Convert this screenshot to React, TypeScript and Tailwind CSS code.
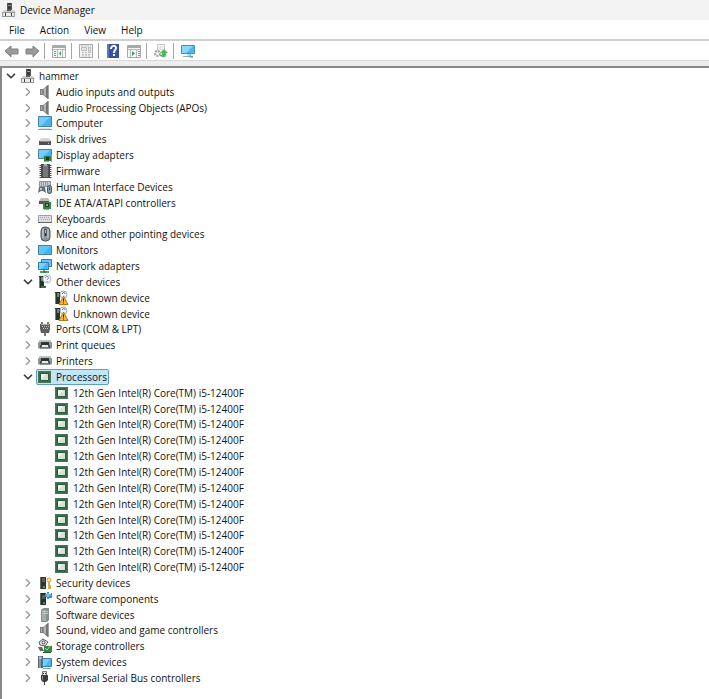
import React, { useState } from 'react';
import { ChevronDown, ChevronRight } from 'lucide-react';

interface DeviceNode {
  label: string;
  icon: keyof typeof icons;
  children?: DeviceNode[];
}

const icons = {
  host: (
    <>
      <path d="M6 1h5v8H6z" fill="#5a5a5a" />
      <path d="M7 1h3v7H7z" fill="#3c3c3c" />
      <path d="M7 3.500h3" stroke="#999" />
      <path d="M3 8h10l2 3H1z" fill="#cfcfcf" />
      <path d="M6 7h4v2H6z" fill="#5a5a5a" />
      <path d="M1 10h13v5H1z" fill="#ececec" />
      <path d="M1 10.500h13M1 14.500h13M1.500 10v5M13.500 10v5" stroke="#9a9a9a" />
      <path d="M4 11h1v3H4zM10 11h1v3h-1z" fill="#3d3d3d" />
    </>
  ),
  speaker: (
    <>
      <path d="M3 5h3v6H3z" fill="#7d7d7d" />
      <path d="M4 6h1v4H4z" fill="#adadad" />
      <path d="M6 5l5-4h1v14h-1l-5-4z" fill="#8d8d8d" />
      <path d="M8 4l3-3v14l-3-3z" fill="#757575" />
      <path d="M7 5l2-2v9l-2-1z" fill="#b4b4b4" />
      <path d="M11.500 1v14" stroke="#a2a2a2" />
    </>
  ),
  computer: (
    <>
      <path d="M1.500 1.500h13v10h-13z" fill="#45b4f5" stroke="#4384ab" />
      <path d="M2 2h11l-9 9H2z" fill="#75ccfb" />
      <path d="M1 14.500h14" stroke="#8798a3" />
      <path d="M3 13.500h10" stroke="#dbe6ec" />
    </>
  ),
  disk: (
    <>
      <path d="M4 7h8l2 3H2z" fill="#d6d6d6" />
      <path d="M2 10h12v4H2z" fill="#505050" />
      <path d="M3 10.500h10" stroke="#888" />
      <path d="M11 12h1v1h-1z" fill="#9fd6a0" />
    </>
  ),
  display: (
    <>
      <path d="M1.500 2.500h13v9h-13z" fill="#45b4f5" stroke="#4384ab" />
      <path d="M2 3h11l-8 8H2z" fill="#75ccfb" />
      <path d="M7 9h7v5H7z" fill="#327b40" />
      <path d="M9 10h3v3H9z" fill="#163e20" />
      <path d="M7 14.500h5M14.500 8v7" stroke="#b6a33c" />
    </>
  ),
  firmware: (
    <>
      <path d="M4 1h9v14H4z" fill="#4e4e4e" />
      <path d="M6 2h5v12H6z" fill="#777" />
      <path d="M3.500 2v13M13.500 2v13" stroke="#444" strokeWidth="2" strokeDasharray="1 1" />
      <path d="M7 1h3v2H7z" fill="#aaa" />
    </>
  ),
  hid: (
    <>
      <path d="M2.500 2.500h11v5h-11z" fill="#c3cbd1" stroke="#8b959c" />
      <path d="M4 4h8M4 6h8" stroke="#65717a" strokeDasharray="1 1" />
      <path d="M1 14l1-6h6l1 6-3-2H4z" fill="#5f6f7b" />
      <path d="M3 10h2M4 9v2" stroke="#e6eef3" />
      <rect x="10.500" y="6.500" width="4" height="8" rx="2" fill="#8f9ca6" stroke="#45535e" />
      <path d="M12.500 8v3" stroke="#45535e" />
    </>
  ),
  ide: (
    <>
      <path d="M4 3h7l2 3H2z" fill="#bbb" />
      <path d="M2 6h10v3H2z" fill="#575757" />
      <path d="M6 7h8v7H6z" fill="#3c8247" />
      <path d="M8 8h4v4H8z" fill="#204425" />
      <path d="M9 9h2v2H9z" fill="#86ac8a" />
      <path d="M7 14.500h5" stroke="#b3a64c" />
    </>
  ),
  keyboard: (
    <>
      <path d="M1.500 4.500h13v7h-13z" fill="#dedede" stroke="#9ba0a4" />
      <path d="M3 6.500h10M4 8.500h9" stroke="#a4aaae" strokeDasharray="1 1" />
      <path d="M1 11.500h14" stroke="#666" />
    </>
  ),
  mouse: (
    <>
      <rect x="4" y="1" width="9" height="14" rx="4" fill="#8b949b" stroke="#4b535a" />
      <path d="M6 3v9M11 3v9" stroke="#d1d7db" />
      <path d="M8.500 3v7" stroke="#303437" strokeWidth="2" />
      <path d="M8.500 4v3" stroke="#adbcc7" />
    </>
  ),
  monitor: (
    <>
      <path d="M1.500 3.500h13v9h-13z" fill="#45b4f5" stroke="#4384ab" />
      <path d="M2 4h11l-7 8H2z" fill="#65c4fa" />
    </>
  ),
  network: (
    <>
      <path d="M4.500 1.500h10v7h-10z" fill="#63c6fb" stroke="#3c7a9f" />
      <path d="M1.500 4.500h10v7h-10z" fill="#49b5f2" stroke="#2d7eae" />
      <path d="M2 5h8l-6 6H2z" fill="#78d2fd" />
      <path d="M3 14h9M7 12v2" stroke="#4aa35a" strokeWidth="2" />
      <path d="M6 13h3v2H6z" fill="#3d78a8" />
    </>
  ),
  other: (
    <>
      <path d="M2 2h5v12H2z" fill="#253529" />
      <path d="M2 3h1v11H2z" fill="#4d9865" />
      <path d="M4 4h2M4 6h2" stroke="#bfd6c4" />
      <path d="M4 12h5v2H4z" fill="#357249" />
      <circle cx="10" cy="5" r="4" fill="#f5f7fc" stroke="#b3bccb" />
      <path d="M8.500 4c0-2 3-2 3 0 0 1-1.500 1-1.500 2M10 7v1" fill="none" stroke="#6c7ba0" />
    </>
  ),
  unknown: (
    <>
      <path d="M1 2h5v12H1z" fill="#253529" />
      <path d="M1 3h1v11H1z" fill="#4d9865" />
      <path d="M3 4h2M3 6h2" stroke="#bfd6c4" />
      <circle cx="9.500" cy="4.500" r="3.500" fill="#f5f7fc" stroke="#9ba7b8" />
      <path d="M8.500 4c0-2 2.500-2 2.500 0" fill="none" stroke="#50618b" />
      <path d="M9.500 6l4.500 8.500H5z" fill="#f6b735" stroke="#b77819" />
      <path d="M9.500 8.500v3M9.500 12.500v1" stroke="#222" />
    </>
  ),
  port: (
    <>
      <path d="M3 3h10v5l-1 4H4L3 8z" fill="#5e5e5e" />
      <path d="M4 3.500h8" stroke="#aaa" />
      <path d="M5 5.500h7M6 7.500h5" stroke="#c3c3c3" strokeDasharray="1 1" />
      <path d="M5 1v2M11 1v2M8 12v3" stroke="#777" strokeWidth="2" />
    </>
  ),
  printer: (
    <>
      <path d="M3 3h10l2 3v5l-2 1H3l-2-1V6z" fill="#8e9695" />
      <path d="M3 3h10l1 2H2z" fill="#bcc2c1" />
      <path d="M4 5h8v3H4z" fill="#303533" />
      <path d="M3 8h10v3H3z" fill="#4d5351" />
      <path d="M5 8h6v2H5z" fill="#e6ebe9" />
      <path d="M4 10.500h8" stroke="#5a8a70" />
    </>
  ),
  cpu: (
    <>
      <path d="M1 2h13v12H1z" fill="#3b6c4a" />
      <path d="M1.500 2.500h12v11h-12z" fill="none" stroke="#5a8064" strokeDasharray="1 1" />
      <path d="M3.500 4.500h8v7h-8z" fill="#d3e4d5" stroke="#2e5a3b" />
      <path d="M4 5h5l-5 5z" fill="#f3f8f3" />
    </>
  ),
  security: (
    <>
      <path d="M3 2h6v12H3z" fill="#303632" />
      <path d="M3 2h1v12H3z" fill="#606d65" />
      <path d="M5 4h3M5 6h3" stroke="#7d8a80" />
      <path d="M6 11h2v2H6z" fill="#40a057" />
      <circle cx="12" cy="5" r="2" fill="#fae7a3" stroke="#d0a343" />
      <path d="M12 7v7M12 11h2M12 13h2" stroke="#d9ae4c" strokeWidth="2" />
    </>
  ),
  component: (
    <>
      <path d="M3 2h6v12H3z" fill="#27312b" />
      <path d="M3 2h1v12H3z" fill="#527160" />
      <path d="M5 5h3M5 7h3" stroke="#7d8f83" />
      <path d="M6 11h2v2H6z" fill="#3b965a" />
      <path d="M8 3h2V1h2v2h2V2h1v5h-3v1h-2V6H8z" fill="#3a8fca" />
      <path d="M9 4h5M11 2v4" stroke="#8fd1f6" />
    </>
  ),
  software: (
    <>
      <path d="M5 2l2-1h5v12l-2 2H4V3z" fill="#84908a" />
      <path d="M5 3h4v11H5z" fill="#a2aea8" />
      <path d="M5 4.500h6M5 6.500h6" stroke="#c0cac4" />
      <path d="M9 11h1v2H9z" fill="#739e80" />
    </>
  ),
  storage: (
    <>
      <path d="M2 4l4-3 5 3-3 4-5-1z" fill="#e6e6e6" stroke="#5d625f" />
      <circle cx="6.500" cy="4.500" r="1.500" fill="#fff" stroke="#444" />
      <path d="M1 9h4l2 4H3z" fill="#666" />
      <path d="M7 8h8v6H7z" fill="#3a8745" />
      <path d="M8 10l2 2 3-4" stroke="#b3cf7e" fill="none" />
      <path d="M6 14.500h8" stroke="#285f30" />
    </>
  ),
  system: (
    <>
      <path d="M1 2h5v12H1z" fill="#586670" />
      <path d="M2 2h2v12H2z" fill="#8e9aa1" />
      <path d="M2 4h3" stroke="#e1e9ec" />
      <path d="M5.500 4.500h9v8h-9z" fill="#49b5f2" stroke="#377fa8" />
      <path d="M6 5h7l-5 7H6z" fill="#78cdfb" />
      <path d="M6 14.500h8" stroke="#74a3bd" />
    </>
  ),
  usb: (
    <>
      <path d="M5.500 1.500h4v4h-4z" fill="#ddd" stroke="#777" />
      <path d="M6 3h1v1H6zM8 3h1v1H8z" fill="#333" />
      <path d="M4 5h7v5l-2 2H6l-2-2z" fill="#3c3c3c" />
      <path d="M5 6h1v4H5z" fill="#8c8c8c" />
      <path d="M7.500 12v3" stroke="#444" />
    </>
  ),
};

const processors: DeviceNode[] = Array.from({ length: 12 }, () => ({
  label: '12th Gen Intel(R) Core(TM) i5-12400F',
  icon: 'cpu',
}));

const categories: DeviceNode[] = [
  { label: 'Audio inputs and outputs', icon: 'speaker', children: [] },
  { label: 'Audio Processing Objects (APOs)', icon: 'speaker', children: [] },
  { label: 'Computer', icon: 'computer', children: [] },
  { label: 'Disk drives', icon: 'disk', children: [] },
  { label: 'Display adapters', icon: 'display', children: [] },
  { label: 'Firmware', icon: 'firmware', children: [] },
  { label: 'Human Interface Devices', icon: 'hid', children: [] },
  { label: 'IDE ATA/ATAPI controllers', icon: 'ide', children: [] },
  { label: 'Keyboards', icon: 'keyboard', children: [] },
  { label: 'Mice and other pointing devices', icon: 'mouse', children: [] },
  { label: 'Monitors', icon: 'monitor', children: [] },
  { label: 'Network adapters', icon: 'network', children: [] },
  {
    label: 'Other devices',
    icon: 'other',
    children: [
      { label: 'Unknown device', icon: 'unknown' },
      { label: 'Unknown device', icon: 'unknown' },
    ],
  },
  { label: 'Ports (COM & LPT)', icon: 'port', children: [] },
  { label: 'Print queues', icon: 'printer', children: [] },
  { label: 'Printers', icon: 'printer', children: [] },
  { label: 'Processors', icon: 'cpu', children: processors },
  { label: 'Security devices', icon: 'security', children: [] },
  { label: 'Software components', icon: 'component', children: [] },
  { label: 'Software devices', icon: 'software', children: [] },
  { label: 'Sound, video and game controllers', icon: 'speaker', children: [] },
  { label: 'Storage controllers', icon: 'storage', children: [] },
  { label: 'System devices', icon: 'system', children: [] },
  { label: 'Universal Serial Bus controllers', icon: 'usb', children: [] },
];

const root: DeviceNode = { label: 'hammer', icon: 'host', children: categories };

const indents = ['pl-px', 'pl-[18px]', 'pl-[35px]'];

const Icon: React.FC<{ name: keyof typeof icons }> = ({ name }) => (
  <svg viewBox="0 0 16 16" className="size-4 shrink-0" aria-hidden="true">
    {icons[name]}
  </svg>
);

interface RowProps {
  node: DeviceNode;
  depth: number;
  open: boolean;
  selected: boolean;
  onToggle: () => void;
  onSelect: () => void;
}

const Row: React.FC<RowProps> = ({ node, depth, open, selected, onToggle, onSelect }) => (
  <li className={`flex h-4 min-h-[15px] shrink items-center ${indents[depth]}`}>
    {node.children ? (
      <button
        type="button"
        onClick={onToggle}
        aria-label={`${open ? 'Collapse' : 'Expand'} ${node.label}`}
        className="flex w-4 shrink-0 justify-center"
      >
        {open ? (
          <ChevronDown className="size-3.5 text-[#404040]" strokeWidth={3} />
        ) : (
          <ChevronRight className="size-3.5 text-[#949494]" strokeWidth={2} />
        )}
      </button>
    ) : (
      <span className="w-4 shrink-0" />
    )}
    <button
      type="button"
      onClick={onSelect}
      className={`flex h-4 items-center gap-[3px] rounded-xs border pr-px whitespace-nowrap ${
        selected ? 'border-[#5b9fc9] bg-[#c3e5fa]' : 'border-transparent'
      }`}
    >
      <Icon name={node.icon} />
      {node.label}
    </button>
  </li>
);

const ToolButton: React.FC<{ label: string; children: React.ReactNode }> = ({ label, children }) => (
  <button type="button" aria-label={label} title={label} className="shrink-0">
    <svg viewBox="0 0 16 16" className="size-4">
      {children}
    </svg>
  </button>
);

const Separator = () => <span className="mr-[6px] ml-1 h-4 w-px shrink-0 bg-[#a5a5a5]" />;

const Toolbar = () => (
  <div role="toolbar" className="flex h-[19px] items-center pl-1">
    <ToolButton label="Back">
      <path d="M1 8l6-5v3h7v5H7v3z" fill="#9a9a9a" stroke="#808080" />
    </ToolButton>
    <span className="w-1" />
    <ToolButton label="Forward">
      <path d="M15 8L9 3v3H2v5h7v3z" fill="#9a9a9a" stroke="#808080" />
    </ToolButton>
    <Separator />
    <ToolButton label="Show/Hide Console Tree">
      <path d="M1.500 2.500h13v12h-13z" fill="#f6f7f7" stroke="#a4aaae" />
      <path d="M2 3h12v2H2z" fill="#a1adb5" />
      <path d="M2 6.500h12M6.500 7v7M11.500 7v7" stroke="#b4bbc0" />
      <path d="M3 8.500h2M3 10.500h2M3 12.500h2" stroke="#7794a7" />
      <path d="M10 8v5l-2-2.500z" fill="#45a052" />
    </ToolButton>
    <Separator />
    <ToolButton label="Properties">
      <path d="M1.500 1.500h13v13h-13z" fill="#f2f2f2" stroke="#a8a8a8" />
      <path d="M3.500 4.500h5v3h-5zM10.500 4.500h2v5h-2z" fill="#e4e4e4" stroke="#bbb" />
      <path d="M3 3h10M4 9.500h5M4 11.500h8M4 13h8" stroke="#bbb" strokeDasharray="2 1" />
    </ToolButton>
    <Separator />
    <ToolButton label="Help">
      <path d="M2 1h12v14H2z" fill="#3451a5" />
      <path d="M2 1h2v14H2z" fill="#6178bf" />
      <path d="M6 6c0-4 5-4 5-1 0 2-2 2-2 5M9 11v2" fill="none" stroke="#fff" strokeWidth="2" />
    </ToolButton>
    <span className="w-[5px]" />
    <ToolButton label="Show/Hide Action Pane">
      <path d="M1.500 2.500h13v12h-13z" fill="#f6f7f7" stroke="#a4aaae" />
      <path d="M2 3h12v2H2z" fill="#a1adb5" />
      <path d="M2 6.500h12M4.500 7v7M10.500 7v7" stroke="#b4bbc0" />
      <path d="M12 8.500h2M12 10.500h2M12 12.500h2" stroke="#7794a7" />
      <path d="M6 8v5l3-2.500z" fill="#45a052" />
    </ToolButton>
    <Separator />
    <ToolButton label="Scan for hardware changes">
      <path d="M4.500 1.500h7v11h-7z" fill="#f8f8f8" stroke="#c4c4c4" />
      <path d="M6 4h4M6 6h4" stroke="#d4d4d4" />
      <circle cx="4.500" cy="10.500" r="2.500" fill="#f3f3f3" stroke="#a5a5a5" strokeWidth="2" strokeDasharray="2 1" />
      <path d="M11 6l4 4h-2v2c0 3-5 3-6 0h2V10H7z" fill="#4fb85c" />
    </ToolButton>
    <Separator />
    <ToolButton label="Devices">
      <path d="M1.500 2.500h13v8h-13z" fill="#4cb7f3" stroke="#4c8db3" />
      <path d="M2 3h11l-7 7H2z" fill="#8bd7fc" />
      <path d="M8 11v2M3 13.500h10" stroke="#8fb0c2" />
      <path d="M10 11v3h3" fill="none" stroke="#4e8db1" />
    </ToolButton>
  </div>
);

const App: React.FC = () => {
  const [collapsed, setCollapsed] = useState<string[]>([]);
  const [selected, setSelected] = useState('Processors');

  const isOpen = (node: DeviceNode) => !!node.children?.length && !collapsed.includes(node.label);

  const toggle = (label: string) =>
    setCollapsed((prev) => (prev.includes(label) ? prev.filter((l) => l !== label) : [...prev, label]));

  const renderNode = (node: DeviceNode, depth: number, key: string): React.ReactNode => (
    <React.Fragment key={key}>
      <Row
        node={node}
        depth={depth}
        open={isOpen(node)}
        selected={selected === node.label}
        onToggle={() => toggle(node.label)}
        onSelect={() => setSelected(node.label)}
      />
      {isOpen(node) && node.children?.map((child, i) => renderNode(child, depth + 1, `${key}-${i}`))}
    </React.Fragment>
  );

  return (
    <div className="flex h-screen flex-col bg-white font-['Open_Sans','Noto_Sans',sans-serif] text-[10px] leading-4 text-[#111]">
      <header className="flex h-5 shrink-0 items-center gap-[3px] bg-[#f3f3f3] pl-px">
        <Icon name="host" />
        <h1>Device Manager</h1>
      </header>
      <nav className="flex h-[19px] shrink-0 items-center gap-[15px] pl-[9px]">
        <button type="button">File</button>
        <button type="button">Action</button>
        <button type="button">View</button>
        <button type="button">Help</button>
      </nav>
      <div className="shrink-0 border-t-2 border-b border-t-[#d0d0d0] border-b-[#d8d8d8]">
        <Toolbar />
      </div>
      <main className="flex min-h-0 flex-1 flex-col bg-[#eee] pt-[5px]">
        <ul className="flex min-h-0 flex-1 flex-col overflow-auto border-t-2 border-l-2 border-[#888] bg-white pb-[13px]">
          {renderNode(root, 0, 'root')}
        </ul>
      </main>
    </div>
  );
};

export default App;
